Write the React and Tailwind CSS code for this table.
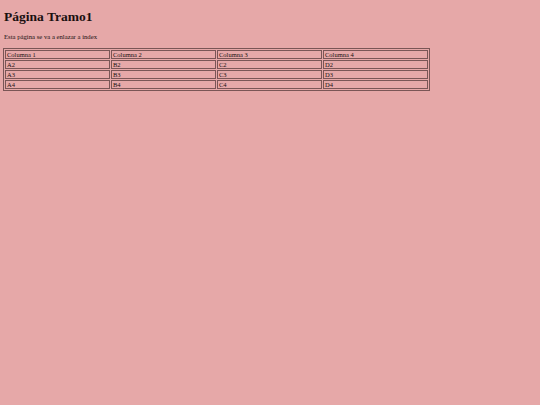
import React from "react";

const rows = [
  ["Columna 1", "Columna 2", "Columna 3", "Columna 4"],
  ["A2", "B2", "C2", "D2"],
  ["A3", "B3", "C3", "D3"],
  ["A4", "B4", "C4", "D4"],
];

export default function App() {
  return (
    <div className="min-h-[405px] w-full bg-[#e6a8a8] px-[4px] pt-[9px] text-[#1a1010] font-['Liberation_Serif',serif]">
      <h1 className="text-[13.5px] font-bold leading-[16px]">Página Tramo1</h1>
      <p className="mt-[8px] text-[6.7px] leading-[8px]">Esta página se va a enlazar a index</p>
      <table className="mt-[7px] w-[427px] -ml-[1px] border-separate border-spacing-[1px] border border-[#7a5656] text-[6.5px] leading-[7px]">
        <tbody>
          {rows.map((r, i) => (
            <tr key={i}>
              {r.map((c) => (
                <td key={c} className="w-1/4 h-[9px] border border-[#7a5656] px-[1px] py-0 text-left">
                  {c}
                </td>
              ))}
            </tr>
          ))}
        </tbody>
      </table>
    </div>
  );
}
